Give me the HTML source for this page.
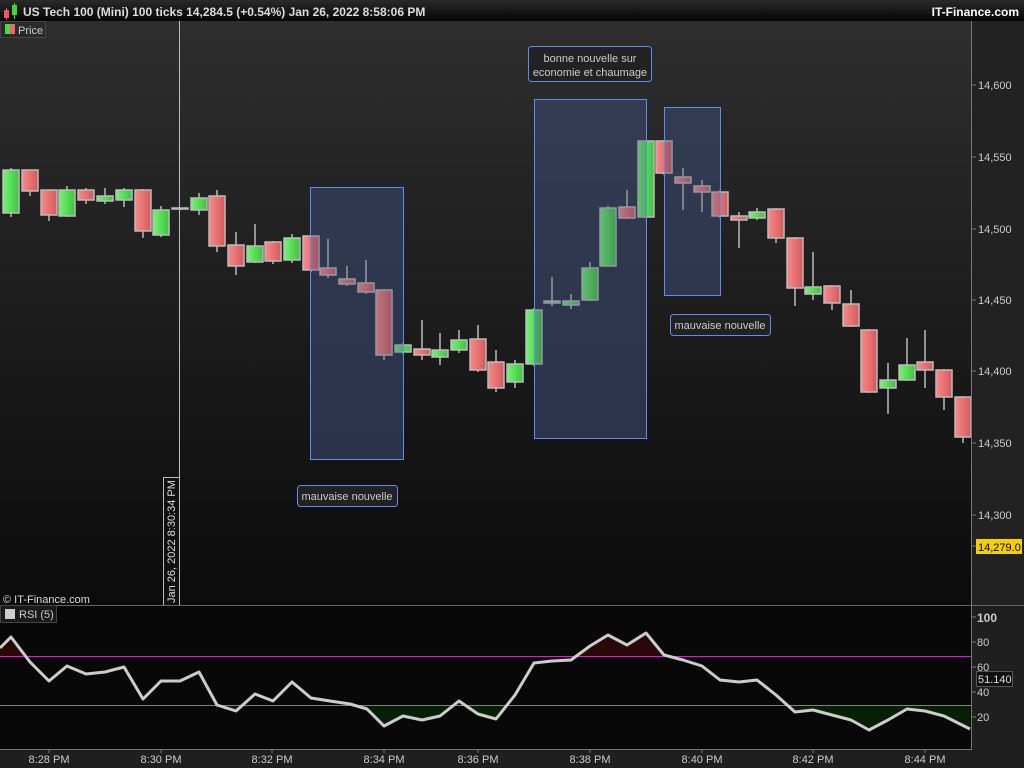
<!DOCTYPE html>
<html><head><meta charset="utf-8"><style>
body{margin:0;width:1024px;height:768px;overflow:hidden;background:#202020;font-family:"Liberation Sans",sans-serif;}
svg{display:block}
</style></head><body>
<svg width="1024" height="768" xmlns="http://www.w3.org/2000/svg" font-family="Liberation Sans, sans-serif">
<defs>
<linearGradient id="bg" x1="0" y1="0" x2="0" y2="1"><stop offset="0" stop-color="#2e2e2e"/><stop offset="1" stop-color="#0b0b0b"/></linearGradient>
<linearGradient id="tb" x1="0" y1="0" x2="0" y2="1"><stop offset="0" stop-color="#2a2a2a"/><stop offset="1" stop-color="#050505"/></linearGradient>
<linearGradient id="g" x1="0" y1="0" x2="1" y2="0"><stop offset="0" stop-color="#74f474"/><stop offset="1" stop-color="#3ec43e"/></linearGradient>
<linearGradient id="r" x1="0" y1="0" x2="1" y2="0"><stop offset="0" stop-color="#fa8a8a"/><stop offset="1" stop-color="#d45a5a"/></linearGradient>
<clipPath id="up"><rect x="0" y="606" width="971" height="50"/></clipPath>
<clipPath id="dn"><rect x="0" y="706" width="971" height="43"/></clipPath>
</defs>
<rect width="1024" height="768" fill="#1f1f1f"/>
<rect x="0" y="21" width="971" height="585" fill="url(#bg)"/>
<rect x="971" y="21" width="53" height="585" fill="#222"/>
<rect x="0" y="0" width="1024" height="21" fill="url(#tb)"/>
<rect x="4" y="10" width="5" height="8" fill="#e55"/><line x1="6.5" y1="8" x2="6.5" y2="20" stroke="#e55"/>
<rect x="12" y="5" width="5" height="10" fill="#3d3"/><line x1="14.5" y1="3" x2="14.5" y2="19" stroke="#3d3"/>
<text x="23" y="16" fill="#ddd" font-size="12" font-weight="bold">US Tech 100 (Mini) 100 ticks 14,284.5 (+0.54%) Jan 26, 2022 8:58:06 PM</text>
<text x="1019" y="16" fill="#fff" font-size="12" font-weight="bold" text-anchor="end">IT-Finance.com</text>
<rect x="0.5" y="21.5" width="45" height="16" fill="#2a2a2a" stroke="#444"/>
<rect x="5" y="24" width="5" height="10" fill="#4d4"/><rect x="10" y="24" width="5" height="10" fill="#e66"/>
<text x="18" y="34" fill="#ccc" font-size="11">Price</text>
<line x1="179.5" y1="21" x2="179.5" y2="606" stroke="#bbb"/>
<rect x="163.5" y="477.5" width="16" height="128" fill="#111" stroke="#bbb"/>
<text transform="translate(175,603) rotate(-90)" fill="#ddd" font-size="11">Jan 26, 2022 8:30:34 PM</text>
<g fill="#3a4a70" fill-opacity="0.4">
<rect x="310.5" y="187.5" width="93" height="272"/>
<rect x="534.5" y="99.5" width="112" height="339"/>
<rect x="664.5" y="107.5" width="56" height="188"/>
</g>
<g stroke="#bbb" stroke-width="1.5">
<line x1="11" y1="168" x2="11" y2="217"/><rect x="3" y="170" width="16" height="43" fill="url(#g)"/>
<line x1="30" y1="170" x2="30" y2="196"/><rect x="22" y="170" width="16" height="21" fill="url(#r)"/>
<line x1="49" y1="190" x2="49" y2="221"/><rect x="41" y="190" width="16" height="25" fill="url(#r)"/>
<line x1="67" y1="186" x2="67" y2="217"/><rect x="59" y="190" width="16" height="26" fill="url(#g)"/>
<line x1="86" y1="188" x2="86" y2="204"/><rect x="78" y="190" width="16" height="10" fill="url(#r)"/>
<line x1="105" y1="188" x2="105" y2="204"/><rect x="97" y="196" width="16" height="5" fill="url(#g)"/>
<line x1="124" y1="188" x2="124" y2="207"/><rect x="116" y="190" width="16" height="10" fill="url(#g)"/>
<line x1="143" y1="189" x2="143" y2="238"/><rect x="135" y="190" width="16" height="41" fill="url(#r)"/>
<line x1="161" y1="206" x2="161" y2="237"/><rect x="153" y="210" width="16" height="25" fill="url(#g)"/>
<line x1="180" y1="208" x2="180" y2="210"/><rect x="172" y="208" width="16" height="1" fill="#bbb"/>
<line x1="199" y1="193" x2="199" y2="215"/><rect x="191" y="198" width="16" height="12" fill="url(#g)"/>
<line x1="217" y1="190" x2="217" y2="252"/><rect x="209" y="196" width="16" height="50" fill="url(#r)"/>
<line x1="236" y1="232" x2="236" y2="275"/><rect x="228" y="245" width="16" height="21" fill="url(#r)"/>
<line x1="255" y1="224" x2="255" y2="263"/><rect x="247" y="246" width="16" height="16" fill="url(#g)"/>
<line x1="273" y1="241" x2="273" y2="264"/><rect x="265" y="242" width="16" height="19" fill="url(#r)"/>
<line x1="292" y1="234" x2="292" y2="263"/><rect x="284" y="238" width="16" height="22" fill="url(#g)"/>
<line x1="311" y1="235" x2="311" y2="272"/><rect x="303" y="236" width="16" height="34" fill="url(#r)"/>
<line x1="328" y1="239" x2="328" y2="278"/><rect x="320" y="268" width="16" height="7" fill="url(#r)"/>
<line x1="347" y1="266" x2="347" y2="286"/><rect x="339" y="279" width="16" height="5" fill="url(#r)"/>
<line x1="366" y1="260" x2="366" y2="294"/><rect x="358" y="283" width="16" height="9" fill="url(#r)"/>
<line x1="384" y1="289" x2="384" y2="360"/><rect x="376" y="290" width="16" height="65" fill="url(#r)"/>
<line x1="403" y1="343" x2="403" y2="354"/><rect x="395" y="345" width="16" height="7" fill="url(#g)"/>
<line x1="422" y1="320" x2="422" y2="360"/><rect x="414" y="349" width="16" height="6" fill="url(#r)"/>
<line x1="440" y1="333" x2="440" y2="365"/><rect x="432" y="350" width="16" height="7" fill="url(#g)"/>
<line x1="459" y1="330" x2="459" y2="353"/><rect x="451" y="340" width="16" height="10" fill="url(#g)"/>
<line x1="478" y1="325" x2="478" y2="372"/><rect x="470" y="339" width="16" height="31" fill="url(#r)"/>
<line x1="496" y1="350" x2="496" y2="392"/><rect x="488" y="362" width="16" height="26" fill="url(#r)"/>
<line x1="515" y1="360" x2="515" y2="388"/><rect x="507" y="364" width="16" height="18" fill="url(#g)"/>
<line x1="534" y1="308" x2="534" y2="366"/><rect x="526" y="310" width="16" height="54" fill="url(#g)"/>
<line x1="552" y1="277" x2="552" y2="306"/><rect x="544" y="301" width="16" height="2" fill="#bbb"/>
<line x1="571" y1="294" x2="571" y2="309"/><rect x="563" y="301" width="16" height="4" fill="url(#g)"/>
<line x1="590" y1="262" x2="590" y2="301"/><rect x="582" y="268" width="16" height="32" fill="url(#g)"/>
<line x1="608" y1="206" x2="608" y2="267"/><rect x="600" y="208" width="16" height="58" fill="url(#g)"/>
<line x1="627" y1="190" x2="627" y2="219"/><rect x="619" y="207" width="16" height="11" fill="url(#r)"/>
<line x1="646" y1="140" x2="646" y2="218"/><rect x="638" y="141" width="16" height="76" fill="url(#g)"/>
<line x1="664" y1="140" x2="664" y2="175"/><rect x="656" y="141" width="16" height="32" fill="url(#r)"/>
<line x1="683" y1="168" x2="683" y2="210"/><rect x="675" y="177" width="16" height="6" fill="url(#r)"/>
<line x1="702" y1="180" x2="702" y2="212"/><rect x="694" y="186" width="16" height="6" fill="url(#r)"/>
<line x1="720" y1="190" x2="720" y2="218"/><rect x="712" y="192" width="16" height="24" fill="url(#r)"/>
<line x1="739" y1="212" x2="739" y2="248"/><rect x="731" y="216" width="16" height="4" fill="url(#r)"/>
<line x1="757" y1="208" x2="757" y2="220"/><rect x="749" y="212" width="16" height="6" fill="url(#g)"/>
<line x1="776" y1="208" x2="776" y2="243"/><rect x="768" y="209" width="16" height="29" fill="url(#r)"/>
<line x1="795" y1="237" x2="795" y2="306"/><rect x="787" y="238" width="16" height="50" fill="url(#r)"/>
<line x1="813" y1="252" x2="813" y2="300"/><rect x="805" y="287" width="16" height="7" fill="url(#g)"/>
<line x1="832" y1="285" x2="832" y2="310"/><rect x="824" y="286" width="16" height="17" fill="url(#r)"/>
<line x1="851" y1="290" x2="851" y2="327"/><rect x="843" y="304" width="16" height="22" fill="url(#r)"/>
<line x1="869" y1="329" x2="869" y2="393"/><rect x="861" y="330" width="16" height="62" fill="url(#r)"/>
<line x1="888" y1="363" x2="888" y2="414"/><rect x="880" y="380" width="16" height="8" fill="url(#g)"/>
<line x1="907" y1="338" x2="907" y2="381"/><rect x="899" y="365" width="16" height="15" fill="url(#g)"/>
<line x1="925" y1="330" x2="925" y2="388"/><rect x="917" y="362" width="16" height="8" fill="url(#r)"/>
<line x1="944" y1="369" x2="944" y2="410"/><rect x="936" y="370" width="16" height="27" fill="url(#r)"/>
<line x1="963" y1="396" x2="963" y2="443"/><rect x="955" y="397" width="16" height="40" fill="url(#r)"/>
</g>
<g fill="#3a4a70" fill-opacity="0.3" stroke="#5a8ef0" stroke-width="1">
<rect x="310.5" y="187.5" width="93" height="272"/>
<rect x="534.5" y="99.5" width="112" height="339"/>
<rect x="664.5" y="107.5" width="56" height="188"/>
</g>
<g fill="#222" stroke="#5a8ef0">
<rect x="297.5" y="485.5" width="100" height="21" rx="3"/>
<rect x="528.5" y="46.5" width="123" height="35" rx="3"/>
<rect x="670.5" y="314.5" width="100" height="21" rx="3"/>
</g>
<g fill="#ccc" font-size="11" text-anchor="middle">
<text x="347" y="500">mauvaise nouvelle</text>
<text x="590" y="62">bonne nouvelle sur</text>
<text x="590" y="76">economie et chaumage</text>
<text x="720" y="329">mauvaise nouvelle</text>
</g>
<line x1="971.5" y1="21" x2="971.5" y2="749" stroke="#777"/>
<g fill="#ccc" font-size="11">
<text x="978" y="89">14,600</text><text x="978" y="161">14,550</text><text x="978" y="233">14,500</text>
<text x="978" y="304">14,450</text><text x="978" y="375">14,400</text><text x="978" y="447">14,350</text><text x="978" y="519">14,300</text>
</g>
<g stroke="#777"><line x1="972" y1="85" x2="976" y2="85"/><line x1="972" y1="157" x2="976" y2="157"/><line x1="972" y1="229" x2="976" y2="229"/><line x1="972" y1="300" x2="976" y2="300"/><line x1="972" y1="371" x2="976" y2="371"/><line x1="972" y1="443" x2="976" y2="443"/><line x1="972" y1="515" x2="976" y2="515"/><line x1="972" y1="546" x2="976" y2="546"/></g>
<rect x="976" y="539" width="46" height="15" fill="#f5d000"/>
<text x="978" y="551" fill="#000" font-size="11">14,279.0</text>
<text x="3" y="603" fill="#ddd" font-size="11">© IT-Finance.com</text>
<line x1="0" y1="605.5" x2="1024" y2="605.5" stroke="#666"/>
<rect x="0" y="606" width="971" height="143" fill="#080808"/>
<polygon clip-path="url(#up)" fill="#2a0808" points="0,648 11,637 30,662 49,681 67,666 86,674 105,672 124,667 143,699 161,681 180,681 199,672 217,705 236,711 255,694 273,701 292,682 311,698 330,701 350,704 367,709 384,726 403,716 422,720 440,716 459,701 478,714 496,719 515,695 534,663 552,661 571,660 590,646 608,635 627,645 646,633 664,655 683,660 702,666 720,680 739,682 757,680 776,695 795,712 813,710 832,715 851,720 869,730 888,720 907,709 925,711 944,716 970,729 970,656 0,656"/>
<polygon clip-path="url(#dn)" fill="#062006" points="0,648 11,637 30,662 49,681 67,666 86,674 105,672 124,667 143,699 161,681 180,681 199,672 217,705 236,711 255,694 273,701 292,682 311,698 330,701 350,704 367,709 384,726 403,716 422,720 440,716 459,701 478,714 496,719 515,695 534,663 552,661 571,660 590,646 608,635 627,645 646,633 664,655 683,660 702,666 720,680 739,682 757,680 776,695 795,712 813,710 832,715 851,720 869,730 888,720 907,709 925,711 944,716 970,729 970,706 0,706"/>
<line x1="0" y1="656.5" x2="971" y2="656.5" stroke="#f0f"/>
<line x1="0" y1="705.5" x2="971" y2="705.5" stroke="#aaa" stroke-width="0.8"/>
<polyline fill="none" stroke="#ccc" stroke-width="3" stroke-linejoin="round" points="0,648 11,637 30,662 49,681 67,666 86,674 105,672 124,667 143,699 161,681 180,681 199,672 217,705 236,711 255,694 273,701 292,682 311,698 330,701 350,704 367,709 384,726 403,716 422,720 440,716 459,701 478,714 496,719 515,695 534,663 552,661 571,660 590,646 608,635 627,645 646,633 664,655 683,660 702,666 720,680 739,682 757,680 776,695 795,712 813,710 832,715 851,720 869,730 888,720 907,709 925,711 944,716 970,729"/>
<rect x="0.5" y="605.5" width="56" height="17" fill="#1a1a1a" stroke="#444"/>
<rect x="5" y="609" width="10" height="10" fill="#ccc"/>
<text x="19" y="618" fill="#ccc" font-size="11">RSI (5)</text>
<g fill="#ccc" font-size="11">
<text x="977" y="622" font-weight="bold" font-size="12">100</text><text x="977" y="646">80</text><text x="977" y="671">60</text><text x="977" y="696">40</text><text x="977" y="721">20</text>
</g>
<g stroke="#777"><line x1="972" y1="617" x2="976" y2="617"/><line x1="972" y1="642" x2="976" y2="642"/><line x1="972" y1="667" x2="976" y2="667"/><line x1="972" y1="692" x2="976" y2="692"/><line x1="972" y1="717" x2="976" y2="717"/></g>
<rect x="976.5" y="671.5" width="36" height="15" fill="#111" stroke="#555"/>
<text x="978" y="683" fill="#ddd" font-size="11">51.140</text>
<line x1="0" y1="749.5" x2="972" y2="749.5" stroke="#777"/>
<g fill="#ccc" font-size="11" text-anchor="middle">
<text x="49" y="763">8:28 PM</text><text x="161" y="763">8:30 PM</text><text x="272" y="763">8:32 PM</text><text x="384" y="763">8:34 PM</text><text x="478" y="763">8:36 PM</text><text x="590" y="763">8:38 PM</text><text x="702" y="763">8:40 PM</text><text x="813" y="763">8:42 PM</text><text x="925" y="763">8:44 PM</text>
</g>
<g stroke="#777"><line x1="49" y1="750" x2="49" y2="753"/><line x1="161" y1="750" x2="161" y2="753"/><line x1="272" y1="750" x2="272" y2="753"/><line x1="384" y1="750" x2="384" y2="753"/><line x1="478" y1="750" x2="478" y2="753"/><line x1="590" y1="750" x2="590" y2="753"/><line x1="702" y1="750" x2="702" y2="753"/><line x1="813" y1="750" x2="813" y2="753"/><line x1="925" y1="750" x2="925" y2="753"/></g>
</svg>
</body></html>
